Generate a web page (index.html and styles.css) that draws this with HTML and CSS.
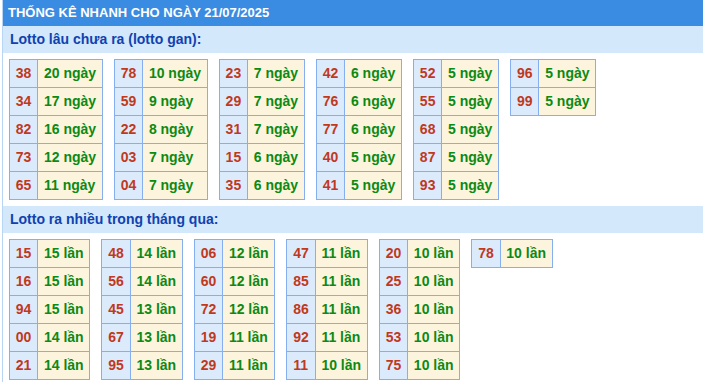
FILE: index.html
```html
<!DOCTYPE html>
<html lang="vi">
<head>
<meta charset="utf-8">
<link rel="stylesheet" href="styles.css">
</head>
<body>
<div class="wrap">
  <div class="title">THỐNG KÊ NHANH CHO NGÀY 21/07/2025</div>
  <div class="sub">Lotto lâu chưa ra (lotto gan):</div>
  <div class="tables">
    <table class="t"><tr><td class="n">38</td><td class="v">20 ngày</td></tr><tr><td class="n">34</td><td class="v">17 ngày</td></tr><tr><td class="n">82</td><td class="v">16 ngày</td></tr><tr><td class="n">73</td><td class="v">12 ngày</td></tr><tr><td class="n">65</td><td class="v">11 ngày</td></tr></table>
    <table class="t"><tr><td class="n">78</td><td class="v">10 ngày</td></tr><tr><td class="n">59</td><td class="v">9 ngày</td></tr><tr><td class="n">22</td><td class="v">8 ngày</td></tr><tr><td class="n">03</td><td class="v">7 ngày</td></tr><tr><td class="n">04</td><td class="v">7 ngày</td></tr></table>
    <table class="t"><tr><td class="n">23</td><td class="v">7 ngày</td></tr><tr><td class="n">29</td><td class="v">7 ngày</td></tr><tr><td class="n">31</td><td class="v">7 ngày</td></tr><tr><td class="n">15</td><td class="v">6 ngày</td></tr><tr><td class="n">35</td><td class="v">6 ngày</td></tr></table>
    <table class="t"><tr><td class="n">42</td><td class="v">6 ngày</td></tr><tr><td class="n">76</td><td class="v">6 ngày</td></tr><tr><td class="n">77</td><td class="v">6 ngày</td></tr><tr><td class="n">40</td><td class="v">5 ngày</td></tr><tr><td class="n">41</td><td class="v">5 ngày</td></tr></table>
    <table class="t"><tr><td class="n">52</td><td class="v">5 ngày</td></tr><tr><td class="n">55</td><td class="v">5 ngày</td></tr><tr><td class="n">68</td><td class="v">5 ngày</td></tr><tr><td class="n">87</td><td class="v">5 ngày</td></tr><tr><td class="n">93</td><td class="v">5 ngày</td></tr></table>
    <table class="t"><tr><td class="n">96</td><td class="v">5 ngày</td></tr><tr><td class="n">99</td><td class="v">5 ngày</td></tr></table>
  </div>
  <div class="sub">Lotto ra nhiều trong tháng qua:</div>
  <div class="tables">
    <table class="t"><tr><td class="n">15</td><td class="v">15 lần</td></tr><tr><td class="n">16</td><td class="v">15 lần</td></tr><tr><td class="n">94</td><td class="v">15 lần</td></tr><tr><td class="n">00</td><td class="v">14 lần</td></tr><tr><td class="n">21</td><td class="v">14 lần</td></tr></table>
    <table class="t"><tr><td class="n">48</td><td class="v">14 lần</td></tr><tr><td class="n">56</td><td class="v">14 lần</td></tr><tr><td class="n">45</td><td class="v">13 lần</td></tr><tr><td class="n">67</td><td class="v">13 lần</td></tr><tr><td class="n">95</td><td class="v">13 lần</td></tr></table>
    <table class="t"><tr><td class="n">06</td><td class="v">12 lần</td></tr><tr><td class="n">60</td><td class="v">12 lần</td></tr><tr><td class="n">72</td><td class="v">12 lần</td></tr><tr><td class="n">19</td><td class="v">11 lần</td></tr><tr><td class="n">29</td><td class="v">11 lần</td></tr></table>
    <table class="t"><tr><td class="n">47</td><td class="v">11 lần</td></tr><tr><td class="n">85</td><td class="v">11 lần</td></tr><tr><td class="n">86</td><td class="v">11 lần</td></tr><tr><td class="n">92</td><td class="v">11 lần</td></tr><tr><td class="n">11</td><td class="v">10 lần</td></tr></table>
    <table class="t"><tr><td class="n">20</td><td class="v">10 lần</td></tr><tr><td class="n">25</td><td class="v">10 lần</td></tr><tr><td class="n">36</td><td class="v">10 lần</td></tr><tr><td class="n">53</td><td class="v">10 lần</td></tr><tr><td class="n">75</td><td class="v">10 lần</td></tr></table>
    <table class="t"><tr><td class="n">78</td><td class="v">10 lần</td></tr></table>
  </div>
</div>
</body>
</html>
```
FILE: styles.css
```css
html, body {
  margin: 0;
  padding: 0;
  background: #ffffff;
}
body {
  font-family: "Liberation Sans", Arial, sans-serif;
}
.wrap {
  margin-left: 2px;
  border-left: 1px solid #b9d5f4;
  min-height: 382px;
}
.title {
  height: 26px;
  line-height: 26px;
  background: #3a8ce2;
  color: #ffffff;
  font-weight: bold;
  font-size: 13px;
  padding-left: 5px;
}
.sub {
  height: 27px;
  line-height: 27px;
  background: #d3e8fb;
  color: #0f42b0;
  font-weight: bold;
  font-size: 14px;
  padding-left: 7px;
}
.tables {
  display: flex;
  align-items: flex-start;
  gap: 11px;
  padding: 6px 0 6px 6px;
}
.t {
  border-collapse: collapse;
  font-weight: bold;
  font-size: 14px;
}
.t td {
  border: 1px solid #86aff0;
  padding: 5px 5.8px;
  line-height: 17px;
  white-space: nowrap;
}
.t td.n {
  background: #dcebfc;
  color: #c0391d;
}
.t td.v {
  background: #fdf4dd;
  color: #0b8a14;
}
```
